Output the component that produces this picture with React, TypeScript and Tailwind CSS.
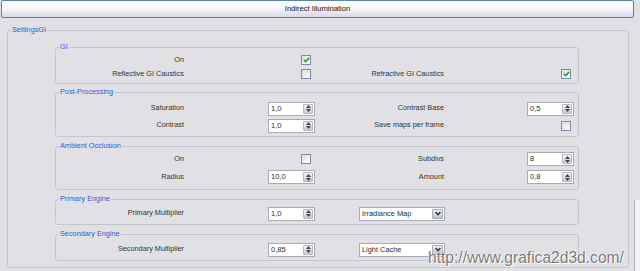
import React from 'react'

const font = { fontFamily: '"Liberation Sans", Arial, sans-serif' }

const CheckBox = ({ checked, ml }: { checked?: boolean; ml: string }) => (
  <div
    className={`${ml} w-[10px] h-[10px] border border-[#7b8aa6] bg-gradient-to-br from-[#dcdce2] to-white flex items-center justify-center`}
  >
    {checked && (
      <svg width="7" height="6" viewBox="0 0 7 6">
        <path d="M0.8 2.8 L2.6 4.6 L6.2 0.9" stroke="#22a322" strokeWidth="1.6" fill="none" />
      </svg>
    )}
  </div>
)

const Spinner = ({ value, ml }: { value: string; ml: string }) => (
  <div className={`${ml} w-[47px] h-[14px] border border-[#a5acb5] bg-white flex`}>
    <div className="flex-1 pl-[2px] leading-[12px] text-[7.6px] text-[#2a2a2a]">{value}</div>
    <div className="w-[10px] my-[1px] mr-[1px] bg-gradient-to-b from-[#f2f2f5] to-[#c9c9d2] border border-[#b8b8c4] rounded-[1px] flex flex-col items-center justify-center gap-[1px]">
      <svg width="5" height="3" viewBox="0 0 5 3">
        <path d="M0 3 L2.5 0 L5 3 Z" fill="#444" />
      </svg>
      <svg width="5" height="3" viewBox="0 0 5 3">
        <path d="M0 0 L2.5 3 L5 0 Z" fill="#444" />
      </svg>
    </div>
  </div>
)

const Dropdown = ({ value }: { value: string }) => (
  <div className="ml-[39px] w-[86px] h-[14px] shrink-0 border border-[#a5acb5] bg-white flex">
    <div className="flex-1 pl-[2px] text-left leading-[12px] text-[7.4px] text-[#2a2a2a]">{value}</div>
    <div className="w-[11px] my-[1px] mr-[1px] bg-gradient-to-b from-[#eeeef4] to-[#c4c4d2] border border-[#a8a8bc] rounded-[1px] flex items-center justify-center">
      <svg width="6" height="5" viewBox="0 0 6 5">
        <path d="M0.6 1 L3 3.6 L5.4 1" stroke="#2a2a3a" strokeWidth="1.4" fill="none" />
      </svg>
    </div>
  </div>
)

const Row = ({
  h,
  left,
  leftCtrl,
  right,
  rightCtrl,
  select
}: {
  h: string
  left: string
  leftCtrl: React.ReactNode
  right?: string
  rightCtrl?: React.ReactNode
  select?: string
}) => (
  <div className={`flex items-center ${h}`}>
    <div className="w-[128px] text-right text-[#333]">{left}</div>
    <div className="w-[136px] flex">{leftCtrl}</div>
    {select ? (
      <Dropdown value={select} />
    ) : (
      <>
        <div className="w-[124px] text-right text-[#333]">{right}</div>
        <div className="flex">{rightCtrl}</div>
      </>
    )}
  </div>
)

const Group = ({
  title,
  className,
  children
}: {
  title: string
  className: string
  children: React.ReactNode
}) => (
  <div className={`relative ml-[47px] w-[524px] border border-[#c6c5cd] rounded-[3px] ${className}`}>
    <span className="absolute left-[3px] -top-[6px] px-[1px] bg-[#e1e0e5] text-[#2c5fd8] leading-[10px]">
      {title}
    </span>
    {children}
  </div>
)

export default function App() {
  return (
    <div className="relative w-[640px] h-[271px] bg-[#e1e0e5] overflow-hidden text-[7.3px]" style={font}>
      <div className="ml-[1px] w-[633px] h-[18px] border border-[#5f80a8] rounded-[2px] bg-gradient-to-b from-white via-[#f4f4fa] to-[#d8d8ea] flex items-center justify-center text-[7.6px] text-[#111]">
        Indirect Illumination
      </div>

      <div className="relative mt-[12px] ml-[7px] w-[622px] h-[238px] border border-[#c6c5cd] rounded-[3px] pt-[16px]">
        <span className="absolute left-[3px] -top-[6px] px-[1px] bg-[#e1e0e5] text-[#2c5fd8] leading-[10px]">
          SettingsGI
        </span>

        <Group title="GI" className="h-[37px] pt-[5px]">
          <Row h="h-[14px]" left="On" leftCtrl={<CheckBox checked ml="ml-[117px]" />} />
          <Row
            h="h-[14px]"
            left="Reflective GI Caustics"
            leftCtrl={<CheckBox ml="ml-[117px]" />}
            right="Refractive GI Caustics"
            rightCtrl={<CheckBox checked ml="ml-[117px]" />}
          />
        </Group>

        <Group title="Post-Processing" className="mt-[8px] h-[45px] pt-[7px]">
          <Row
            h="h-[17px]"
            left="Saturation"
            leftCtrl={<Spinner value="1,0" ml="ml-[84px]" />}
            right="Contrast Base"
            rightCtrl={<Spinner value="0,5" ml="ml-[83px]" />}
          />
          <Row
            h="h-[17px]"
            left="Contrast"
            leftCtrl={<Spinner value="1,0" ml="ml-[84px]" />}
            right="Save maps per frame"
            rightCtrl={<CheckBox ml="ml-[117px]" />}
          />
        </Group>

        <Group title="Ambient Occlusion" className="mt-[9px] h-[44px] pt-[3px]">
          <Row
            h="h-[18px]"
            left="On"
            leftCtrl={<CheckBox ml="ml-[117px]" />}
            right="Subdivs"
            rightCtrl={<Spinner value="8" ml="ml-[83px]" />}
          />
          <Row
            h="h-[18px]"
            left="Radius"
            leftCtrl={<Spinner value="10,0" ml="ml-[84px]" />}
            right="Amount"
            rightCtrl={<Spinner value="0,8" ml="ml-[83px]" />}
          />
        </Group>

        <Group title="Primary Engine" className="mt-[9px] h-[26px] pt-[5px]">
          <Row
            h="h-[17px]"
            left="Primary Multiplier"
            leftCtrl={<Spinner value="1,0" ml="ml-[84px]" />}
            select="Irradiance Map"
          />
        </Group>

        <Group title="Secondary Engine" className="mt-[9px] h-[27px] pt-[6px]">
          <Row
            h="h-[17px]"
            left="Secondary Multiplier"
            leftCtrl={<Spinner value="0,85" ml="ml-[84px]" />}
            select="Light Cache"
          />
        </Group>
      </div>

      <div className="absolute left-[634px] top-[200px] w-[6px] h-[71px] border-l border-[#b4b3bb] bg-[#f3f3f5]" />

      <div
        className="absolute left-[428px] top-[249px] text-[15.6px] leading-[18px] text-[#7a7a7a]"
        style={{ textShadow: '0 0 1px #fff, 0 0 1px #fff, 1px 1px 0 #fff' }}
      >
        http://www.grafica2d3d.com/
      </div>
    </div>
  )
}
